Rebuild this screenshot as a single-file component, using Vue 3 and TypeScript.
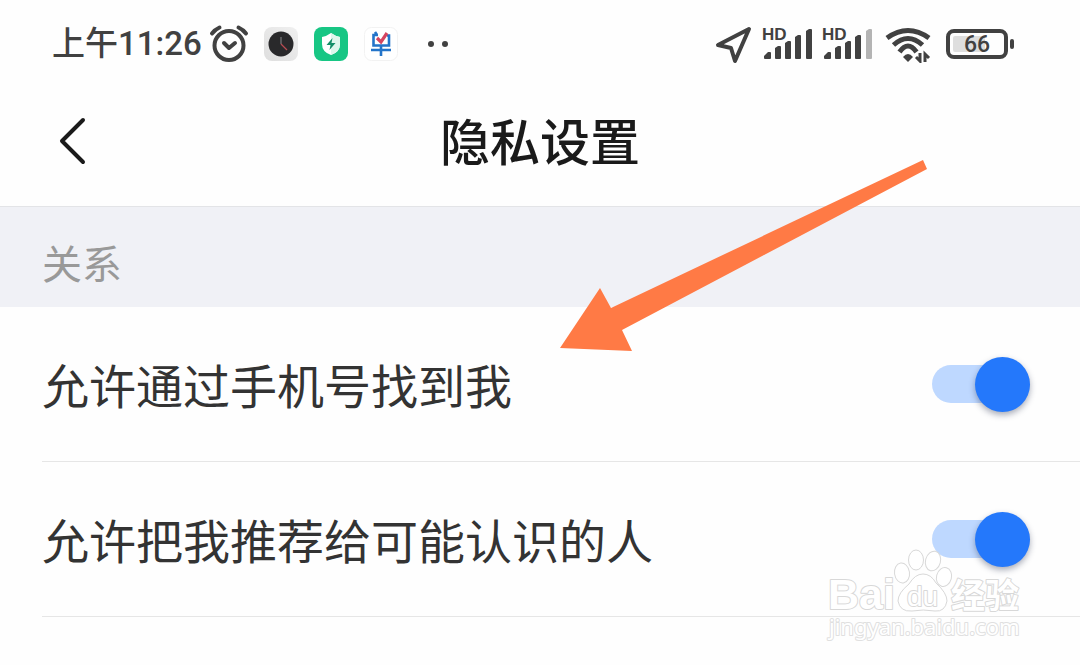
<script setup lang="ts">
import { ref } from 'vue'

interface Setting {
  id: string
  label: string
  enabled: boolean
}

interface Signal {
  id: string
  bars: number
}

const settings = ref<Setting[]>([
  { id: 'find-by-phone', label: '允许通过手机号找到我', enabled: true },
  { id: 'recommend-me', label: '允许把我推荐给可能认识的人', enabled: true },
])

const signals: Signal[] = [
  { id: 'sim-1', bars: 5 },
  { id: 'sim-2', bars: 4 },
]

const barPaths: string[] = [
  'M2 32V30L6 26H8Q9 26 9 27V32Q9 33 8 33H3Q2 33 2 32Z',
  'M13 32V22L16 20H18Q19 20 19 21V32Q19 33 18 33H14Q13 33 13 32Z',
  'M23 32V17L26 15H28Q29 15 29 16V32Q29 33 28 33H24Q23 33 23 32Z',
  'M33 32V11L36 9H38Q39 9 39 10V32Q39 33 38 33H34Q33 33 33 32Z',
  'M44 32V5L47 3H49Q50 3 50 4V32Q50 33 49 33H45Q44 33 44 32Z',
]
</script>

<template>
  <main class="screen">
    <div class="status">
      <time class="clock">上午11:26</time>
      <svg class="alarm" width="40" height="40" viewBox="0 0 40 40" aria-hidden="true">
        <circle cx="20" cy="21.500" r="14.500" />
        <path d="M15 19L20 24L26 19" />
        <path d="M3 9.500Q6 5.500 10.500 3.500M29.500 3.500Q34 5.500 37 9.500" />
      </svg>
      <div class="apps">
        <svg width="34" height="34" viewBox="0 0 34 34" aria-hidden="true">
          <defs>
            <linearGradient id="dial-case" x1="1" y1="0" x2="0" y2="1">
              <stop offset="0" stop-color="#f0f0f0" />
              <stop offset="1" stop-color="#dedede" />
            </linearGradient>
          </defs>
          <rect width="34" height="34" rx="8" fill="url(#dial-case)" />
          <circle cx="17" cy="17" r="12.500" fill="#29292b" />
          <path d="M17 10V17" stroke="#6a6a6c" stroke-width="1.500" />
          <path d="M17 17L23 23" stroke="#b84b52" stroke-width="1.200" />
        </svg>
        <svg width="34" height="34" viewBox="0 0 34 34" aria-hidden="true">
          <rect width="34" height="34" rx="8" fill="#17c684" />
          <path d="M17 6Q21 9 26 10V17Q26 25 17 28Q8 25 8 17V10Q13 9 17 6Z" fill="#fff" />
          <path d="M17 6Q21 9 26 10V17Q26 25 17 28Z" fill="#def7ec" />
          <path d="M18.500 11L12.500 18H16.500L15.500 23L21.500 16H17.500Z" fill="#138f68" />
        </svg>
        <svg width="34" height="34" viewBox="0 0 34 34" aria-hidden="true">
          <rect x=".5" y=".5" width="33" height="33" rx="7" fill="#fff" stroke="#f2f2f2" />
          <path d="M14 8H9.500V18.500H25V8.500H23M7 23H27M17 19V29M11 5L13 8" fill="none" stroke="#2374c9" stroke-width="2.600" />
          <path d="M13 11L17 15L23 6" fill="none" stroke="#d54560" stroke-width="3.200" />
        </svg>
      </div>
      <svg class="more" width="22" height="8" viewBox="0 0 22 8" aria-hidden="true">
        <circle cx="4" cy="4" r="3" />
        <circle cx="18" cy="4" r="3" />
      </svg>
      <svg class="location" width="38" height="40" viewBox="0 0 38 40" aria-hidden="true">
        <path d="M35 5L4 21L17 24L21 37Z" />
      </svg>
      <div class="signals">
        <svg v-for="signal in signals" :key="signal.id" width="50" height="44" viewBox="0 -4 50 44" aria-hidden="true">
          <path
            v-for="(d, index) in barPaths"
            :key="index"
            :d="d"
            :class="index < signal.bars ? 'bar' : 'bar-off'"
          />
          <text x="0" y="14" class="hd">HD</text>
        </svg>
      </div>
      <svg class="wifi" width="48" height="38" viewBox="0 0 48 38" aria-hidden="true">
        <path d="M2 13Q23 -2 44 13M8.500 20Q23 7 37.500 20M14.500 27Q23 15 31.500 27" />
        <path class="solid" d="M18 32Q23 26 28 32L23 37Z" />
        <path class="data" d="M31 32L35 36V28M44 33L40 29V37" />
      </svg>
      <div class="battery">
        <span class="cell"><span class="level">66</span></span>
        <span class="cap"></span>
      </div>
    </div>

    <header class="header">
      <button class="back" type="button" aria-label="返回">
        <svg width="30" height="48" viewBox="0 0 30 48" aria-hidden="true">
          <path d="M25 3L4 24L25 45" />
        </svg>
      </button>
      <h1 class="title">隐私设置</h1>
    </header>

    <section>
      <h2 class="group">关系</h2>
      <ul class="list">
        <li v-for="setting in settings" :key="setting.id" class="row">
          <label class="name" :for="setting.id">{{ setting.label }}</label>
          <input :id="setting.id" v-model="setting.enabled" class="switch" type="checkbox" role="switch" />
        </li>
      </ul>
    </section>

    <svg class="arrow" width="368" height="194" viewBox="0 0 368 194" aria-hidden="true">
      <path d="M0 189L40 129L51 149L363 1L367 10L62 171L72 192Z" />
    </svg>

    <svg class="watermark" width="200" height="100" viewBox="0 0 200 100">
      <text class="brand" x="2" y="61">Bai</text>
      <g class="paw">
        <ellipse cx="76" cy="25" rx="7.500" ry="10" transform="rotate(-8 76 25)" />
        <ellipse cx="90" cy="12" rx="7.500" ry="10" />
        <ellipse cx="107" cy="13" rx="7.500" ry="10" transform="rotate(15 107 13)" />
        <ellipse cx="118" cy="29" rx="7.500" ry="9.500" transform="rotate(15 118 29)" />
        <path d="M97 26Q105 26 110 35Q121 45 121 53Q119 64 109 63Q97 61 86 63Q74 64 72 53Q72 45 83 36Q89 26 97 26Z" />
      </g>
      <text class="du" x="81" y="58">du</text>
      <text class="brand-cn" x="125" y="60">经验</text>
      <text class="site" x="3" y="87">jingyan.baidu.com</text>
    </svg>
  </main>
</template>

<style>
body {
  margin: 0;
  background: #fefefe;
}
</style>

<style scoped>
.screen {
  position: relative;
  min-height: 100vh;
  overflow: hidden;
  background: #fefefe;
  color: #333;
  font-family: "Noto Sans CJK SC", "Noto Sans", sans-serif;
}

.status {
  display: flex;
  align-items: center;
  height: 88px;
  padding: 0 66px 0 52px;
  color: #414141;
}

.clock {
  width: 157px;
  font-family: Roboto, "Noto Sans CJK SC", sans-serif;
  font-size: 33px;
  font-weight: 500;
  line-height: 48px;
  white-space: nowrap;
}

.alarm {
  fill: none;
  stroke: #414141;
  stroke-width: 4;
  stroke-linecap: round;
  stroke-linejoin: round;
}

.apps {
  display: flex;
  gap: 16px;
  margin-left: 15px;
}

.more {
  margin-left: 29px;
  fill: #414141;
}

.location {
  margin-left: auto;
  fill: none;
  stroke: #414141;
  stroke-width: 4;
  stroke-linejoin: round;
}

.signals {
  display: flex;
  gap: 10px;
  margin-left: 10px;
}

.bar {
  fill: #414141;
}

.bar-off {
  fill: #b4b4b4;
}

.hd {
  fill: #414141;
  font-family: "Liberation Sans", Arial, sans-serif;
  font-size: 17px;
  font-weight: 700;
}

.wifi {
  margin-left: 13px;
  fill: none;
  stroke: #414141;
  stroke-width: 5;
}

.wifi .solid {
  fill: #414141;
  stroke: none;
}

.wifi .data {
  stroke-width: 3;
}

.battery {
  display: flex;
  align-items: center;
  gap: 2px;
  margin-left: 13px;
}

.cell {
  box-sizing: border-box;
  width: 62px;
  height: 30px;
  padding: 3px;
  border: 4px solid #414141;
  border-radius: 8px;
}

.level {
  display: block;
  height: 16px;
  border-radius: 2px;
  background: linear-gradient(to right, #dedede 66%, transparent 66%);
  font-family: Roboto, "Noto Sans", sans-serif;
  font-size: 23px;
  font-weight: 500;
  line-height: 18px;
  text-align: center;
}

.cap {
  width: 4px;
  height: 10px;
  border-radius: 2px;
  background: #414141;
}

.header {
  display: grid;
  grid-template-columns: 96px 1fr 96px;
  align-items: center;
  height: 118px;
  border-bottom: 1px solid #e3e4e7;
}

.back {
  display: flex;
  justify-content: flex-end;
  padding: 0 8px 12px 0;
  border: 0;
  background: none;
  cursor: pointer;
}

.back path {
  fill: none;
  stroke: #1a1a1a;
  stroke-width: 4;
  stroke-linecap: round;
  stroke-linejoin: round;
}

.title {
  margin: 0;
  padding-bottom: 16px;
  color: #1a1a1a;
  font-size: 50px;
  font-weight: 500;
  line-height: 72px;
  text-align: center;
}

.group {
  margin: 0;
  padding: 25px 42px 15px;
  background: #f0f1f6;
  color: #999;
  font-size: 40px;
  font-weight: 400;
  line-height: 60px;
}

.list {
  margin: 0;
  padding: 0 0 0 42px;
  list-style: none;
}

.row {
  display: flex;
  align-items: center;
  justify-content: space-between;
  height: 154px;
  padding-right: 50px;
  border-bottom: 1px solid #e6e6e6;
}

.name {
  font-size: 47px;
  line-height: 68px;
}

.switch {
  display: flex;
  align-items: center;
  width: 98px;
  height: 38px;
  margin: 0;
  border-radius: 19px;
  background: #d5d5d5;
  appearance: none;
  cursor: pointer;
}

.switch::before {
  width: 55px;
  height: 55px;
  flex: none;
  border-radius: 50%;
  background: #fff;
  box-shadow: 0 3px 6px rgba(40, 50, 80, 0.4);
  content: "";
}

.switch:checked {
  justify-content: flex-end;
  background: #bed8ff;
}

.switch:checked::before {
  background: #2478fb;
}

.arrow {
  position: absolute;
  top: 159px;
  left: 560px;
  fill: #ff7a45;
  pointer-events: none;
}

.watermark {
  position: absolute;
  top: 548px;
  right: 54px;
  fill: #fff;
  stroke: #d8d8d8;
  stroke-width: 2;
  stroke-linejoin: round;
  paint-order: stroke;
  pointer-events: none;
}

.paw {
  stroke-width: 1;
  paint-order: normal;
}

.brand {
  font-family: "Liberation Sans", Arial, sans-serif;
  font-size: 43px;
  font-weight: 700;
}

.du {
  font-family: "Liberation Sans", Arial, sans-serif;
  font-size: 28px;
}

.brand-cn {
  font-family: "Noto Sans CJK SC", sans-serif;
  font-size: 34px;
  font-weight: 700;
}

.site {
  stroke: #e0e0e0;
  font-family: "Noto Sans", sans-serif;
  font-size: 22px;
}
</style>
